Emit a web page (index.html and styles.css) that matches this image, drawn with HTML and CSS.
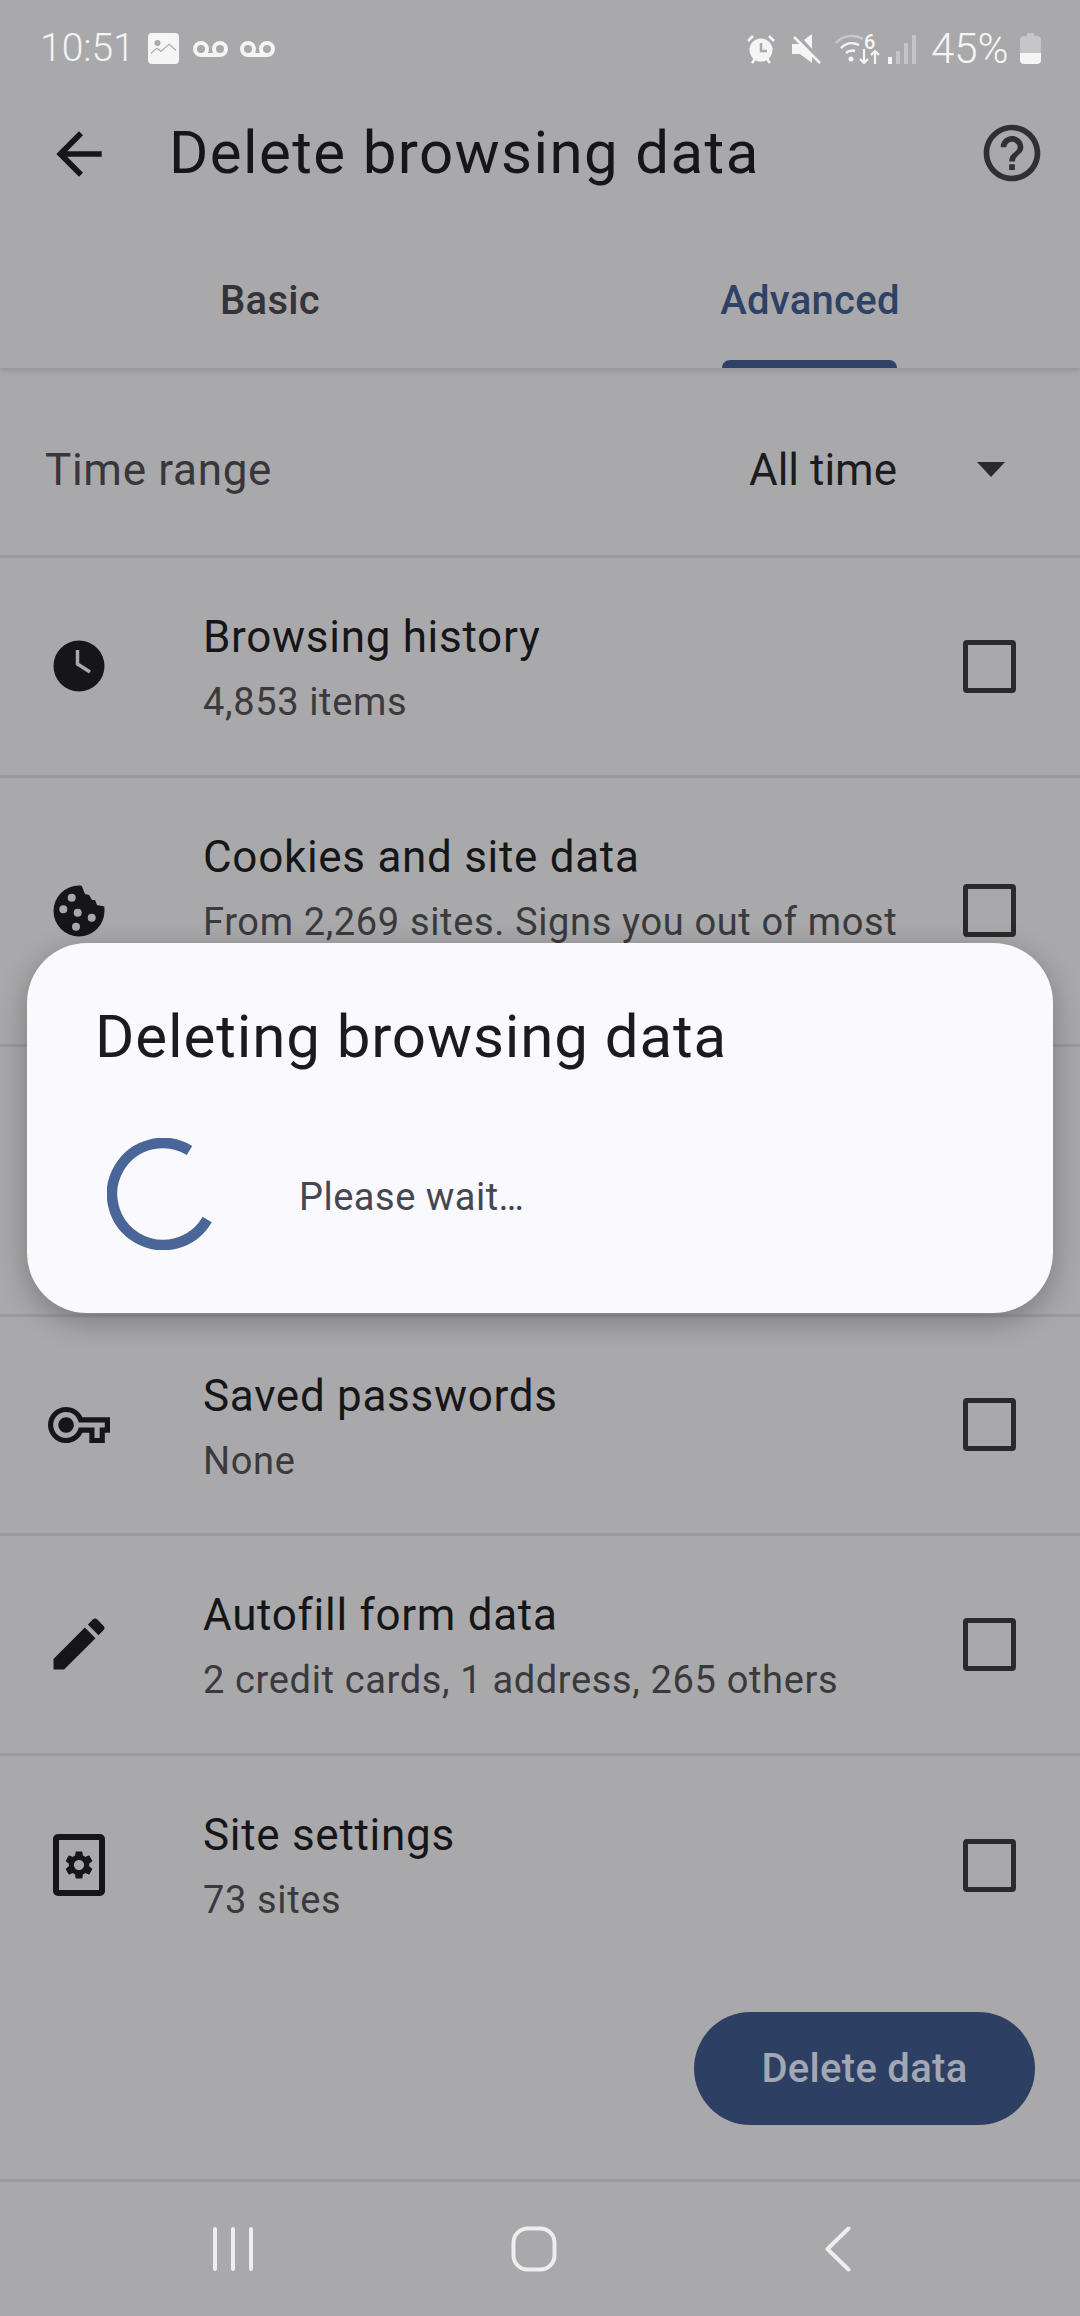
FILE: index.html
```html
<!DOCTYPE html>
<html>
<head>
    <title>Delete browsing data</title>
    <meta charset="UTF-8">
    <link rel="stylesheet" href="styles.css">
</head>
<body>
<div class="page">
    <div class="app-header">
        <div class="status-bar">
            <div class="status-left">
                <span class="clock">10:51</span>
                <svg class="st-image" viewBox="0 0 31 31"><path fill="#f5f5f6" fill-rule="evenodd" d="M4 0h23a4 4 0 0 1 4 4v23a4 4 0 0 1-4 4H4a4 4 0 0 1-4-4V4a4 4 0 0 1 4-4zM9.500 7a3 3 0 1 0 0 6 3 3 0 0 0 0-6zM3 21l6-5 4 3 8-7 7 6v-1.500l-7-6-8 7-4-3-6 5z"/></svg>
                <svg class="st-mail" viewBox="0 0 35 16"><path fill="none" stroke="#f5f5f6" stroke-width="4" d="M8 14h19M8 2a6 6 0 1 0 0 12 6 6 0 0 0 0-12zM27 2a6 6 0 1 0 0 12 6 6 0 0 0 0-12z"/></svg>
                <svg class="st-mail" viewBox="0 0 35 16"><path fill="none" stroke="#f5f5f6" stroke-width="4" d="M8 14h19M8 2a6 6 0 1 0 0 12 6 6 0 0 0 0-12zM27 2a6 6 0 1 0 0 12 6 6 0 0 0 0-12z"/></svg>
            </div>
            <div class="status-right">
                <svg class="st-alarm" viewBox="0 0 30 30"><circle cx="15" cy="16" r="11.500" fill="#f5f5f6"/><path fill="none" stroke="#a9a9ab" stroke-width="2.500" d="M15 9v8h6"/><path fill="none" stroke="#f5f5f6" stroke-width="2.500" d="M2 7l5-5M28 7l-5-5M6 29l3-4M24 29l-3-4"/></svg>
                <svg class="st-mute" viewBox="0 0 30 30"><path fill="#f5f5f6" d="M1 10h7l2-2 11 13v8L9 20H1zM13 6l8-6v15z"/><path fill="none" stroke="#f5f5f6" stroke-width="2.500" d="M3 3l26 26"/></svg>
                <div class="st-wifi">
                    <svg class="st-wifi-arcs" viewBox="0 0 30 30"><path fill="none" stroke="#c9c9cb" stroke-width="2.500" d="M1 10C8 2 20 1 28 6"/><path fill="none" stroke="#f5f5f6" stroke-width="2.500" d="M6 15c5-5 12-6 18-3M11 20c2-2 6-3 9-2"/><circle cx="16" cy="26" r="2.500" fill="#f5f5f6"/></svg>
                    <span class="st-six">6</span>
                    <svg class="st-arrows" viewBox="0 0 22 17"><path fill="none" stroke="#f5f5f6" stroke-width="2.200" d="M6 1v14M2 11l4 4 4-4M17 16V3M13 7l4-4 4 4"/></svg>
                </div>
                <svg class="st-signal" viewBox="0 0 28 30"><rect x="0" y="23" width="4" height="7" fill="#f5f5f6"/><rect x="8" y="17" width="4" height="13" fill="#c4c4c6"/><rect x="16" y="9" width="4" height="21" fill="#c4c4c6"/><rect x="24" y="1" width="4" height="29" fill="#c4c4c6"/></svg>
                <span class="battery-text">45%</span>
                <svg class="st-battery" viewBox="0 0 21 31"><path fill="#c6c6c8" d="M7 0h7v3h3a4 4 0 0 1 4 4v13H0V7a4 4 0 0 1 4-4h3z"/><path fill="#f5f5f6" d="M0 20h21v7a4 4 0 0 1-4 4H4a4 4 0 0 1-4-4z"/></svg>
            </div>
        </div>

        <div class="toolbar">
            <svg class="back-icon" viewBox="0 0 24 24"><path d="M20 11H7.830l5.590-5.590L12 4l-8 8 8 8 1.410-1.410L7.830 13H20v-2z"/></svg>
            <h1 class="toolbar-title">Delete browsing data</h1>
            <svg class="help-icon" viewBox="0 0 24 24"><path d="M11 18h2v-2h-2v2zm1-16C6.480 2 2 6.480 2 12s4.480 10 10 10 10-4.480 10-10S17.520 2 12 2zm0 18c-4.410 0-8-3.590-8-8s3.590-8 8-8 8 3.590 8 8-3.590 8-8 8zm0-14c-2.210 0-4 1.790-4 4h2c0-1.100.9-2 2-2s2 .9 2 2c0 2-3 1.750-3 5h2c0-2.250 3-2.500 3-5 0-2.210-1.790-4-4-4z"/></svg>
        </div>

        <div class="tabs">
            <div class="tab"><span class="tab-label">Basic</span></div>
            <div class="tab tab-active"><span class="tab-label">Advanced</span><span class="tab-line"></span></div>
        </div>
    </div>

    <div class="range-row">
        <span class="range-label">Time range</span>
        <span class="range-value">All time</span>
        <span class="range-arrow"></span>
    </div>

    <div class="row">
        <div class="row-icon">
            <svg class="icon-60" viewBox="0 0 60 60"><circle cx="30" cy="30" r="25.500" fill="#161618"/><path fill="none" stroke="#a9a9ab" stroke-width="3.500" d="M28.500 14v14l12.500 8"/></svg>
        </div>
        <div class="row-text">
            <div class="row-title">Browsing history</div>
            <div class="row-sub">4,853 items</div>
        </div>
        <div class="row-check"><span class="checkbox"></span></div>
    </div>

    <div class="row row-tall">
        <div class="row-icon">
            <svg class="icon-60" viewBox="0 0 60 60"><path fill="#161618" fill-rule="evenodd" d="M30 4.500c1 0 2 0 2.700.5L36 13l4 1 3 5h3l2 5 7.300 1.500c.2 1.500.2 3 .2 4.500A25.500 25.500 0 1 1 30 4.500zM22.700 12.700a4 4 0 1 0 0 8 4 4 0 0 0 0-8zM14.300 24.300a4 4 0 1 0 0 8 4 4 0 0 0 0-8zM28.700 27.700a4 4 0 1 0 0 8 4 4 0 0 0 0-8zM42.700 32.700a4 4 0 1 0 0 8 4 4 0 0 0 0-8zM27 41.700a4 4 0 1 0 0 8 4 4 0 0 0 0-8z"/></svg>
        </div>
        <div class="row-text">
            <div class="row-title">Cookies and site data</div>
            <div class="row-sub">From 2,269 sites. Signs you out of most</div>
        </div>
        <div class="row-check"><span class="checkbox"></span></div>
    </div>

    <!-- this row sits fully behind the dialog -->
    <div class="row row-tall"></div>

    <div class="row">
        <div class="row-icon">
            <svg class="icon-key" viewBox="0 0 24 24"><path d="M22 19h-6v-4h-2.680c-1.140 2.420-3.600 4-6.320 4-3.860 0-7-3.140-7-7s3.140-7 7-7c2.720 0 5.170 1.580 6.320 4H24v6h-2v4zm-4-2h2v-4h2v-2H11.940l-.23-.67C11.010 8.340 9.110 7 7 7c-2.760 0-5 2.240-5 5s2.240 5 5 5c2.110 0 4.010-1.340 4.710-3.330l.23-.67H18v4zM7 15c-1.650 0-3-1.350-3-3s1.350-3 3-3 3 1.350 3 3-1.350 3-3 3z"/><circle cx="7" cy="12" r="1.300"/></svg>
        </div>
        <div class="row-text">
            <div class="row-title">Saved passwords</div>
            <div class="row-sub">None</div>
        </div>
        <div class="row-check"><span class="checkbox"></span></div>
    </div>

    <div class="row">
        <div class="row-icon">
            <svg class="icon-pen" viewBox="0 0 24 24"><path d="M3 17.250V21h3.750L17.810 9.940l-3.750-3.750L3 17.250zM20.710 7.040c.39-.39.39-1.020 0-1.410l-2.340-2.340c-.39-.39-1.020-.39-1.410 0l-1.830 1.830 3.750 3.750 1.830-1.830z"/></svg>
        </div>
        <div class="row-text">
            <div class="row-title">Autofill form data</div>
            <div class="row-sub">2 credit cards, 1 address, 265 others</div>
        </div>
        <div class="row-check"><span class="checkbox"></span></div>
    </div>

    <div class="row row-last">
        <div class="row-icon">
            <span class="site-icon">
                <svg class="site-gear" viewBox="0 0 24 24"><path d="M19.140 12.940c.04-.3.06-.61.06-.94 0-.32-.02-.64-.07-.94l2.030-1.580c.18-.14.23-.41.12-.61l-1.920-3.320c-.12-.22-.37-.29-.59-.22l-2.390.96c-.5-.38-1.030-.7-1.620-.94l-.36-2.540c-.04-.24-.24-.41-.48-.41h-3.840c-.24 0-.43.17-.47.41l-.36 2.540c-.59.24-1.130.57-1.620.94l-2.390-.96c-.22-.08-.47 0-.59.22L2.740 8.870c-.12.21-.08.47.12.61l2.030 1.580c-.05.3-.09.63-.09.94s.02.64.07.94l-2.030 1.580c-.18.14-.23.41-.12.61l1.920 3.320c.12.22.37.29.59.22l2.390-.96c.5.38 1.030.7 1.620.94l.36 2.540c.05.24.24.41.48.41h3.840c.24 0 .44-.17.47-.41l.36-2.540c.59-.24 1.130-.56 1.620-.94l2.390.96c.22.08.47 0 .59-.22l1.920-3.320c.12-.22.07-.47-.12-.61l-2.010-1.580zM12 15.600c-1.980 0-3.600-1.620-3.600-3.600s1.620-3.600 3.600-3.600 3.600 1.620 3.600 3.600-1.620 3.600-3.600 3.600z"/></svg>
            </span>
        </div>
        <div class="row-text">
            <div class="row-title">Site settings</div>
            <div class="row-sub">73 sites</div>
        </div>
        <div class="row-check"><span class="checkbox"></span></div>
    </div>

    <div class="footer">
        <button class="delete-btn">Delete data</button>
    </div>

    <div class="nav-bar">
        <svg class="nav-recent" viewBox="0 0 42 46"><path fill="none" stroke="#eeeeef" stroke-width="4" stroke-linecap="round" d="M3 3v40M21 3v40M39 3v40"/></svg>
        <svg class="nav-home" viewBox="0 0 46 46"><rect x="2.500" y="2.500" width="41" height="41" rx="14" fill="none" stroke="#eeeeef" stroke-width="4"/></svg>
        <svg class="nav-back" viewBox="0 0 26 46"><path fill="none" stroke="#eeeeef" stroke-width="4" stroke-linecap="round" stroke-linejoin="round" d="M23.500 2.500L2.500 23l21 20.500"/></svg>
    </div>

    <div class="dialog">
        <h2 class="dialog-title">Deleting browsing data</h2>
        <div class="dialog-body">
            <svg class="spinner" viewBox="0 0 112 112"><path fill="none" stroke="#4a6699" stroke-width="10.500" d="M82.500 12.400A51 51 0 1 0 100.200 81.500"/></svg>
            <span class="dialog-text">Please wait…</span>
        </div>
    </div>
</div>
</body>
</html>
```

FILE: styles.css
```css
* {
    box-sizing: border-box;
}
html, body {
    margin: 0;
    padding: 0;
}
body {
    font-family: Roboto, "Noto Sans", Arial, sans-serif;
    background-color: #a9a9ab;
}
.page {
    position: relative;
    width: 1080px;
    height: 2316px;
    display: flex;
    flex-direction: column;
    overflow: hidden;
    background-color: #a9a9ab;
    color: #161618;
}

/* header */
.app-header {
    height: 368px;
    position: relative;
    box-shadow: 0 3px 6px rgba(0, 0, 0, 0.12);
}
.status-bar {
    height: 100px;
    padding: 33px 39px 0 40px;
    display: flex;
    justify-content: space-between;
    align-items: flex-start;
    color: #f5f5f6;
}
.status-left, .status-right {
    display: flex;
    align-items: center;
    height: 31px;
}
.clock {
    font-size: 39px;
    line-height: 33px;
    font-weight: 300;
    width: 108px;
}
.st-image {
    width: 31px;
    height: 31px;
    margin-right: 14px;
}
.st-mail {
    width: 35px;
    height: 16px;
    margin-right: 12px;
}
.st-alarm {
    width: 30px;
    height: 30px;
    margin-right: 15px;
}
.st-mute {
    width: 30px;
    height: 30px;
    margin-right: 14px;
}
.st-wifi {
    position: relative;
    width: 44px;
    height: 32px;
    margin-right: 9px;
}
.st-wifi-arcs {
    width: 30px;
    height: 30px;
    display: block;
}
.st-six {
    position: absolute;
    left: 29px;
    top: 0;
    font-size: 20px;
    line-height: 18px;
    font-weight: 500;
}
.st-arrows {
    position: absolute;
    left: 23px;
    top: 15px;
    width: 22px;
    height: 17px;
}
.st-signal {
    width: 28px;
    height: 30px;
    margin-right: 15px;
}
.battery-text {
    width: 80px;
    font-size: 42px;
    line-height: 31px;
    font-weight: 300;
    margin-right: 9px;
}
.st-battery {
    width: 21px;
    height: 31px;
}

.toolbar {
    height: 106px;
    display: flex;
    align-items: center;
}
.back-icon {
    width: 68px;
    height: 68px;
    margin: 2px 0 0 45px;
    fill: #161618;
}
.toolbar-title {
    flex: 1;
    margin: 0 0 0 56px;
    font-size: 60px;
    line-height: 70px;
    font-weight: 400;
    letter-spacing: 1.4px;
    color: #161618;
}
.help-icon {
    width: 68px;
    height: 68px;
    margin-right: 34px;
    fill: #303033;
}

.tabs {
    height: 162px;
    display: grid;
    grid-template-columns: 1fr 1fr;
}
.tab {
    position: relative;
    display: flex;
    justify-content: center;
    padding-top: 72px;
    color: #333338;
}
.tab-label {
    font-size: 40px;
    line-height: 46px;
    font-weight: 500;
    letter-spacing: 0.3px;
}
.tab-active {
    color: #2f4266;
}
.tab-line {
    position: absolute;
    left: 182px;
    bottom: 0;
    width: 175px;
    height: 8px;
    border-radius: 8px 8px 0 0;
    background-color: #2f4266;
}

/* rows */
.range-row {
    height: 190px;
    padding: 16px 75px 0 45px;
    display: flex;
    align-items: center;
    border-bottom: 3px solid #9b9b9d;
    font-size: 44px;
}
.range-label {
    flex: 1;
    letter-spacing: 0.7px;
    color: #37373b;
}
.range-value {
    color: #1c1c1e;
}
.range-arrow {
    margin-left: 80px;
    width: 0;
    height: 0;
    border-left: 14px solid transparent;
    border-right: 14px solid transparent;
    border-top: 15px solid #2a2a2d;
}
.row {
    height: 219.5px;
    flex-shrink: 0;
    display: flex;
    border-bottom: 3px solid #9b9b9d;
}
.row-tall {
    height: 269.5px;
}
.row-last {
    border-bottom: none;
}
.row-icon {
    width: 158px;
    margin-right: 45px;
    display: flex;
    align-items: center;
    justify-content: center;
    fill: #161618;
}
.icon-60 {
    width: 60px;
    height: 60px;
}
.icon-key {
    width: 62px;
    height: 62px;
}
.icon-pen {
    width: 68px;
    height: 68px;
}
.site-icon {
    width: 52px;
    height: 62px;
    border: 6px solid #161618;
    border-radius: 5px;
    display: flex;
    align-items: center;
    justify-content: center;
}
.site-gear {
    width: 34px;
    height: 34px;
}
.row-text {
    flex: 1;
    min-width: 0;
    padding-top: 54px;
}
.row-title {
    font-size: 44px;
    line-height: 50px;
    margin-bottom: 15px;
    letter-spacing: 0.7px;
    color: #161618;
}
.row-sub {
    font-size: 38px;
    line-height: 50px;
    letter-spacing: 0.65px;
    color: #3a3a3e;
}
.row-check {
    width: 130px;
    padding-right: 64px;
    display: flex;
    align-items: center;
    justify-content: flex-end;
}
.checkbox {
    width: 53px;
    height: 53px;
    border: 5px solid #2a2a2e;
    border-radius: 4px;
}

.footer {
    flex: 1;
    display: flex;
    justify-content: flex-end;
    align-items: flex-start;
    padding: 37px 45px 0 0;
    border-bottom: 3px solid #9b9b9d;
}
.delete-btn {
    width: 341px;
    height: 113px;
    border: none;
    border-radius: 57px;
    background-color: #2d4063;
    color: #a3a7b3;
    font-family: inherit;
    font-size: 40px;
    font-weight: 500;
    letter-spacing: 0.3px;
}

.nav-bar {
    height: 134px;
    flex-shrink: 0;
    position: relative;
    display: grid;
    grid-template-columns: 212px 42px 257px 46px 268px 26px;
    align-content: start;
    padding-top: 44px;
}
.nav-recent {
    grid-column: 2;
    width: 42px;
    height: 46px;
}
.nav-home {
    grid-column: 4;
    width: 46px;
    height: 46px;
}
.nav-back {
    grid-column: 6;
    width: 26px;
    height: 46px;
}

/* dialog over the page */
.dialog {
    position: absolute;
    left: 27px;
    top: 943px;
    width: 1026px;
    height: 370px;
    padding: 56px 68px 0;
    border-radius: 60px;
    background-color: #f9f9fe;
    box-shadow: 0 8px 30px rgba(0, 0, 0, 0.28);
}
.dialog-title {
    margin: 0;
    font-size: 60px;
    line-height: 76px;
    font-weight: 400;
    letter-spacing: 0.9px;
    color: #1b1b1f;
}
.dialog-body {
    display: flex;
    align-items: center;
    margin-top: 63px;
    padding-left: 12px;
}
.spinner {
    width: 112px;
    height: 112px;
    margin-right: 80px;
}
.dialog-text {
    padding-top: 6px;
    font-size: 38px;
    letter-spacing: 0.5px;
    color: #44474f;
}
```
